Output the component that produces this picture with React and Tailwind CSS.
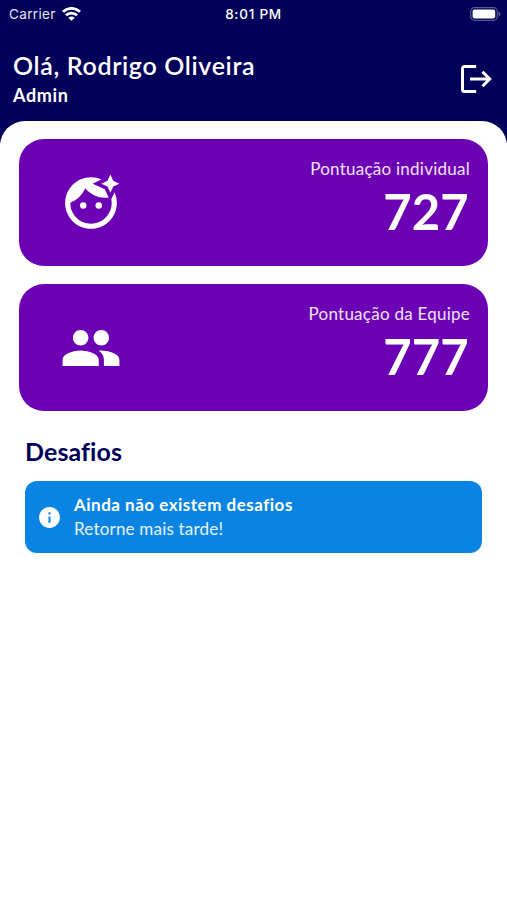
import { MdFaceRetouchingNatural, MdInfo, MdPeople } from 'react-icons/md'

function WifiIcon() {
  return (
    <svg width="19" height="14" viewBox="0 0 19 14" fill="none" stroke="white" strokeWidth="2.8">
      <path d="M1 4.8a12.2 12.2 0 0 1 17 0" />
      <path d="M4 8.3a7.8 7.8 0 0 1 11 0" />
      <path d="M9.5 13.8 6.3 10.9a4.3 4.3 0 0 1 6.4 0z" fill="white" stroke="none" />
    </svg>
  )
}

function BatteryIcon() {
  return (
    <svg width="31" height="14" viewBox="0 0 31 14" fill="none">
      <rect x="0.7" y="0.7" width="26.6" height="12.6" rx="3.8" stroke="white" strokeOpacity="0.35" strokeWidth="1.2" />
      <rect x="2.6" y="2.6" width="22.6" height="8.8" rx="1.8" fill="white" />
      <path d="M28.6 4.8c1.1.5 1.8 1.2 1.8 2.2s-.7 1.7-1.8 2.2z" fill="white" fillOpacity="0.4" />
    </svg>
  )
}

function LogoutIcon() {
  return (
    <svg width="32" height="30" viewBox="0 0 32 30" fill="none" stroke="white" strokeWidth="3">
      <path d="M16.2 2.5H4.5a2 2 0 0 0-2 2v21a2 2 0 0 0 2 2h11.7" />
      <path d="M10 15h20M22.5 7.8l7.2 7.2-7.2 7.2" />
    </svg>
  )
}

function StatusBar() {
  return (
    <div className="grid h-7 grid-cols-3 items-center pr-[6px] pl-[9px] font-['Inter',sans-serif] text-[13.5px] text-white">
      <div className="flex items-center gap-[6px]">
        <span className="tracking-[0.35px] text-white/90">Carrier</span>
        <WifiIcon />
      </div>
      <span className="-ml-[3px] text-center font-medium tracking-[0.75px] whitespace-nowrap">8:01 PM</span>
      <div className="flex justify-end">
        <BatteryIcon />
      </div>
    </div>
  )
}

function ScoreCard({ icon: Icon, label, score }) {
  return (
    <div className="flex h-[127px] items-center justify-between rounded-[25px] bg-[#6c00b5] pr-[19px] pl-[41px] text-white">
      <Icon size={62} />
      <div className="flex h-full flex-col items-end pt-[18px]">
        <p className="-mr-px text-[17px] leading-6 tracking-[0.25px] text-white/90">{label}</p>
        <p className="text-[49px] leading-[61px] font-bold tracking-[0.2px]">{score}</p>
      </div>
    </div>
  )
}

export default function App() {
  return (
    <div className="min-h-screen bg-white font-['Lato',sans-serif]">
      <header className="h-[143px] bg-[#00005a]">
        <StatusBar />
        <div className="flex items-center justify-between pt-[21px] pr-[15px] pl-[13px] text-white">
          <div>
            <h1 className="text-[25px] leading-8 font-semibold tracking-[0.65px]">Olá, Rodrigo Oliveira</h1>
            <p className="pt-[2px] text-[18px] leading-6 font-bold tracking-[0.65px]">Admin</p>
          </div>
          <button aria-label="Sair" className="mt-px cursor-pointer">
            <LogoutIcon />
          </button>
        </div>
      </header>

      <main className="-mt-[22px] rounded-t-[25px] bg-white px-[19px] pt-[18px]">
        <div className="space-y-[18px]">
          <ScoreCard icon={MdFaceRetouchingNatural} label="Pontuação individual" score={727} />
          <ScoreCard icon={MdPeople} label="Pontuação da Equipe" score={777} />
        </div>

        <section className="px-[6px] pt-[24px]">
          <h2 className="text-[25px] leading-8 font-bold tracking-[0.1px] text-[#00005a]">Desafios</h2>
          <div className="mt-[14px] flex h-[72px] items-center rounded-[12px] bg-[#0984e3] pl-3 text-white">
            <MdInfo size={25} />
            <div className="ml-3 text-[17px] leading-6">
              <p className="font-bold tracking-[0.5px]">Ainda não existem desafios</p>
              <p className="tracking-[0.2px] text-white/90">Retorne mais tarde!</p>
            </div>
          </div>
        </section>
      </main>
    </div>
  )
}
